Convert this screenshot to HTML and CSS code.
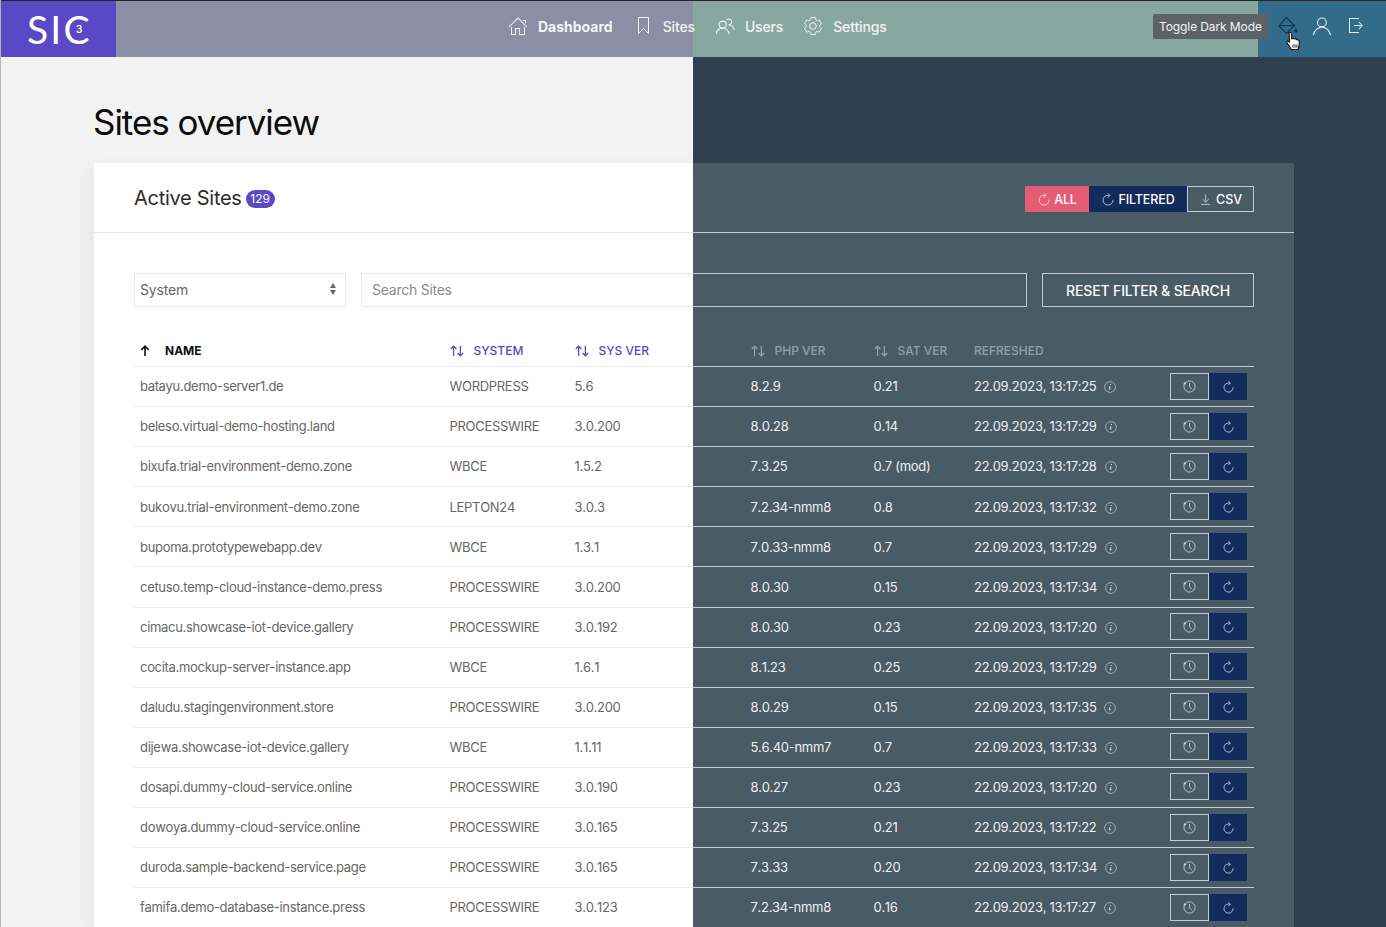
FILE: index.html
```html
<!DOCTYPE html>
<html lang="en">
<head>
<meta charset="utf-8">
<title>Sites overview</title>
<link rel="stylesheet" href="styles.css">
</head>
<body>
<svg class="defs" aria-hidden="true">
  <symbol id="i-home" viewBox="0 0 20 20"><polygon fill="currentColor" points="18.65 11.35 10 2.71 1.35 11.35 0.65 10.65 10 1.29 19.35 10.65"/><polygon fill="currentColor" points="15 4 18 4 18 7 17 7 17 5 15 5"/><polygon fill="currentColor" points="3 11 4 11 4 18 7 18 7 12 12 12 12 18 16 18 16 11 17 11 17 19 11 19 11 13 8 13 8 19 3 19"/></symbol>
  <symbol id="i-bookmark" viewBox="0 0 20 20"><polygon fill="none" stroke="currentColor" points="5.5 1.5 15.5 1.5 15.5 17.5 10.5 12.5 5.5 17.5"/></symbol>
  <symbol id="i-users" viewBox="0 0 20 20"><circle fill="none" stroke="currentColor" stroke-width="1.1" cx="7.7" cy="8.6" r="3.5"/><path fill="none" stroke="currentColor" stroke-width="1.1" d="M1,18.1 C1.7,14.6 4.4,12.1 7.6,12.1 C10.9,12.1 13.7,14.8 14.3,18.3"/><path fill="none" stroke="currentColor" stroke-width="1.1" d="M11.4,4 C12.8,2.4 15.4,2.8 16.3,4.7 C17.2,6.6 15.7,8.9 13.6,8.9 C16.5,8.9 18.8,11.3 19.2,14.1"/></symbol>
  <symbol id="i-cog" viewBox="0 0 20 20"><circle fill="none" stroke="currentColor" cx="9.997" cy="10" r="3.31"/><path fill="none" stroke="currentColor" d="M18.488,12.285 L16.205,16.237 C15.322,15.496 14.185,15.281 13.303,15.791 C12.428,16.289 12.047,17.373 12.246,18.5 L7.735,18.5 C7.938,17.374 7.553,16.299 6.684,15.791 C5.801,15.27 4.655,15.492 3.773,16.237 L1.5,12.285 C2.573,11.871 3.317,10.999 3.317,9.991 C3.305,8.98 2.573,8.121 1.5,7.716 L3.765,3.784 C4.645,4.516 5.794,4.738 6.687,4.232 C7.555,3.722 7.939,2.637 7.735,1.5 L12.263,1.5 C12.072,2.637 12.441,3.71 13.314,4.22 C14.206,4.73 15.343,4.516 16.225,3.794 L18.487,7.714 C17.404,8.117 16.661,8.988 16.67,10.009 C16.672,11.018 17.415,11.88 18.488,12.285 Z"/></symbol>
  <symbol id="i-bucket" viewBox="0 0 20 20"><path fill="none" stroke="currentColor" stroke-width="1.1" d="M8.5 1.5 L16.5 9.5 L8.5 17.5 L0.9 9.9 Z M1.2 9.5 H16.3 M5 4.8 L8.5 1.5"/><path fill="currentColor" d="M18 12 C18.9 13.4 19.6 14.3 19.6 15.2 A1.6 1.6 0 0 1 16.4 15.2 C16.4 14.3 17.1 13.4 18 12 Z"/></symbol>
  <symbol id="i-user" viewBox="0 0 20 20"><circle fill="none" stroke="currentColor" stroke-width="1.1" cx="9.9" cy="6.4" r="4.4"/><path fill="none" stroke="currentColor" stroke-width="1.1" d="M1.5,19 C2.3,14.5 5.8,11.2 10,11.2 C14.2,11.2 17.7,14.6 18.5,19.2"/></symbol>
  <symbol id="i-out" viewBox="0 0 20 20"><polygon fill="currentColor" points="13.1 13.4 12.5 12.8 15.28 10 8 10 8 9 15.28 9 12.5 6.2 13.1 5.62 17 9.5"/><polygon fill="currentColor" points="13 2 3 2 3 17 13 17 13 16 4 16 4 3 13 3"/></symbol>
  <symbol id="i-refresh" viewBox="0 0 20 20"><path fill="none" stroke="currentColor" stroke-width="1.1" d="M17.08,11.15 C17.09,11.31 17.1,11.47 17.1,11.64 C17.1,15.53 13.94,18.69 10.05,18.69 C6.16,18.68 3,15.53 3,11.63 C3,7.74 6.16,4.58 10.05,4.58 C10.9,4.58 11.71,4.73 12.46,5"/><polyline fill="none" stroke="currentColor" stroke-width="1.1" points="9.9 2 12.79 4.89 9.79 7.9"/></symbol>
  <symbol id="i-history" viewBox="0 0 20 20"><circle fill="none" stroke="currentColor" stroke-width="1.2" cx="10" cy="10" r="8.6"/><path fill="none" stroke="currentColor" stroke-width="1.2" d="M10 4.5 V10.4 L13.6 13.6"/><path fill="currentColor" d="M0.6 7 L5 6.4 L2 3 Z"/></symbol>
  <symbol id="i-download" viewBox="0 0 20 20"><polyline fill="none" stroke="currentColor" points="14,10 9.5,14.5 5,10"/><rect fill="currentColor" x="3" y="17" width="13" height="1"/><line fill="none" stroke="currentColor" x1="9.5" y1="13.91" x2="9.5" y2="3"/></symbol>
  <symbol id="i-info" viewBox="0 0 20 20"><path fill="currentColor" d="M12.13,11.59 C11.97,12.84 10.35,14.12 9.1,14.16 C6.17,14.2 9.89,9.46 8.74,8.37 C9.3,8.16 10.62,7.83 10.62,8.81 C10.62,9.63 10.12,10.55 9.88,11.32 C8.66,15.16 12.13,11.15 12.14,11.18 C12.16,11.21 12.16,11.35 12.13,11.59 Z M11.56,5.67 C11.56,6.67 9.36,7.15 9.36,6.03 C9.36,5 11.56,4.54 11.56,5.67 Z"/><circle fill="none" stroke="currentColor" stroke-width="1.1" cx="10" cy="10" r="9"/></symbol>
  <symbol id="i-sort" viewBox="0 0 14 12"><path fill="none" stroke="currentColor" stroke-width="1.3" d="M3.6 11 V1.4 M0.8 4 L3.6 1.2 L6.4 4 M10.4 1 V10.6 M7.6 8 L10.4 10.8 L13.2 8"/></symbol>
  <symbol id="i-up" viewBox="0 0 10 12"><path fill="none" stroke="currentColor" stroke-width="1.6" d="M5 11 V1.5 M1.2 5 L5 1.2 L8.8 5"/></symbol>
</svg>

<header class="topbar">
  <a class="logo"><span class="logo-word">SIC</span><span class="logo-sup">3</span></a>
  <nav class="nav">
    <a class="nav-link active"><svg class="ico"><use href="#i-home"/></svg>Dashboard</a>
    <a class="nav-link"><svg class="ico"><use href="#i-bookmark"/></svg>Sites</a>
    <a class="nav-link"><svg class="ico"><use href="#i-users"/></svg>Users</a>
    <a class="nav-link"><svg class="ico"><use href="#i-cog"/></svg>Settings</a>
  </nav>
  <div class="tools">
    <a class="tool tool-bucket"><svg class="ico"><use href="#i-bucket"/></svg></a>
    <a class="tool"><svg class="ico"><use href="#i-user"/></svg></a>
    <a class="tool"><svg class="ico"><use href="#i-out"/></svg></a>
  </div>
  <div class="tooltip">Toggle Dark Mode</div>
  <svg class="cursor" viewBox="0 0 14 18"><path fill="#fff" stroke="#111" stroke-width="1" d="M3.5 1.6 C4.4 .8 5.6 1.3 5.7 2.4 L5.9 7 C7 6.4 8 6.6 8.3 7.2 C9.2 6.8 10.2 7.1 10.4 7.9 C11.4 7.6 12.6 8.2 12.6 9.4 V12.6 L11.6 16.6 H5.6 L1.6 10.6 C1 9.4 2.2 8.6 3.4 9.6 L3.8 10 Z"/><path fill="none" stroke="#111" stroke-width=".8" d="M7 12 V15 M8.8 12 V15 M10.5 12 V15"/></svg>
</header>

<main class="page">
  <h1 class="title">Sites overview</h1>
  <section class="card">
    <div class="card-head">
      <h2 class="card-title">Active Sites <span class="badge">129</span></h2>
      <div class="head-actions">
        <button class="btn btn-pink"><svg class="ico-s"><use href="#i-refresh"/></svg>ALL</button>
        <button class="btn btn-navy"><svg class="ico-s"><use href="#i-refresh"/></svg>FILTERED</button>
        <button class="btn btn-line"><svg class="ico-s"><use href="#i-download"/></svg>CSV</button>
      </div>
    </div>
    <div class="card-body">
      <div class="filters">
        <div class="select-wrap">
          <select class="select"><option>System</option></select>
          <span class="select-arrows"></span>
        </div>
        <input class="search" type="text" placeholder="Search Sites">
        <button class="reset">RESET FILTER &amp; SEARCH</button>
      </div>
      <div class="table">
        <div class="row row-head">
          <span class="th th-active"><svg class="sort-up"><use href="#i-up"/></svg>NAME</span>
          <span class="th"><svg class="sort"><use href="#i-sort"/></svg>SYSTEM</span>
          <span class="th"><svg class="sort"><use href="#i-sort"/></svg>SYS VER</span>
          <span class="th"><svg class="sort"><use href="#i-sort"/></svg>PHP VER</span>
          <span class="th"><svg class="sort"><use href="#i-sort"/></svg>SAT VER</span>
          <span class="th">REFRESHED</span>
          <span class="th"></span>
        </div>
        <div class="row"><span>batayu.demo-server1.de</span><span>WORDPRESS</span><span>5.6</span><span>8.2.9</span><span>0.21</span><span class="stamp">22.09.2023, 13:17:25<svg class="info"><use href="#i-info"/></svg></span><span class="acts"><a class="act act-line"><svg class="ico-a"><use href="#i-history"/></svg></a><a class="act act-navy"><svg class="ico-a"><use href="#i-refresh"/></svg></a></span></div>
        <div class="row"><span>beleso.virtual-demo-hosting.land</span><span>PROCESSWIRE</span><span>3.0.200</span><span>8.0.28</span><span>0.14</span><span class="stamp">22.09.2023, 13:17:29<svg class="info"><use href="#i-info"/></svg></span><span class="acts"><a class="act act-line"><svg class="ico-a"><use href="#i-history"/></svg></a><a class="act act-navy"><svg class="ico-a"><use href="#i-refresh"/></svg></a></span></div>
        <div class="row"><span>bixufa.trial-environment-demo.zone</span><span>WBCE</span><span>1.5.2</span><span>7.3.25</span><span>0.7 (mod)</span><span class="stamp">22.09.2023, 13:17:28<svg class="info"><use href="#i-info"/></svg></span><span class="acts"><a class="act act-line"><svg class="ico-a"><use href="#i-history"/></svg></a><a class="act act-navy"><svg class="ico-a"><use href="#i-refresh"/></svg></a></span></div>
        <div class="row"><span>bukovu.trial-environment-demo.zone</span><span>LEPTON24</span><span>3.0.3</span><span>7.2.34-nmm8</span><span>0.8</span><span class="stamp">22.09.2023, 13:17:32<svg class="info"><use href="#i-info"/></svg></span><span class="acts"><a class="act act-line"><svg class="ico-a"><use href="#i-history"/></svg></a><a class="act act-navy"><svg class="ico-a"><use href="#i-refresh"/></svg></a></span></div>
        <div class="row"><span>bupoma.prototypewebapp.dev</span><span>WBCE</span><span>1.3.1</span><span>7.0.33-nmm8</span><span>0.7</span><span class="stamp">22.09.2023, 13:17:29<svg class="info"><use href="#i-info"/></svg></span><span class="acts"><a class="act act-line"><svg class="ico-a"><use href="#i-history"/></svg></a><a class="act act-navy"><svg class="ico-a"><use href="#i-refresh"/></svg></a></span></div>
        <div class="row"><span>cetuso.temp-cloud-instance-demo.press</span><span>PROCESSWIRE</span><span>3.0.200</span><span>8.0.30</span><span>0.15</span><span class="stamp">22.09.2023, 13:17:34<svg class="info"><use href="#i-info"/></svg></span><span class="acts"><a class="act act-line"><svg class="ico-a"><use href="#i-history"/></svg></a><a class="act act-navy"><svg class="ico-a"><use href="#i-refresh"/></svg></a></span></div>
        <div class="row"><span>cimacu.showcase-iot-device.gallery</span><span>PROCESSWIRE</span><span>3.0.192</span><span>8.0.30</span><span>0.23</span><span class="stamp">22.09.2023, 13:17:20<svg class="info"><use href="#i-info"/></svg></span><span class="acts"><a class="act act-line"><svg class="ico-a"><use href="#i-history"/></svg></a><a class="act act-navy"><svg class="ico-a"><use href="#i-refresh"/></svg></a></span></div>
        <div class="row"><span>cocita.mockup-server-instance.app</span><span>WBCE</span><span>1.6.1</span><span>8.1.23</span><span>0.25</span><span class="stamp">22.09.2023, 13:17:29<svg class="info"><use href="#i-info"/></svg></span><span class="acts"><a class="act act-line"><svg class="ico-a"><use href="#i-history"/></svg></a><a class="act act-navy"><svg class="ico-a"><use href="#i-refresh"/></svg></a></span></div>
        <div class="row"><span>daludu.stagingenvironment.store</span><span>PROCESSWIRE</span><span>3.0.200</span><span>8.0.29</span><span>0.15</span><span class="stamp">22.09.2023, 13:17:35<svg class="info"><use href="#i-info"/></svg></span><span class="acts"><a class="act act-line"><svg class="ico-a"><use href="#i-history"/></svg></a><a class="act act-navy"><svg class="ico-a"><use href="#i-refresh"/></svg></a></span></div>
        <div class="row"><span>dijewa.showcase-iot-device.gallery</span><span>WBCE</span><span>1.1.11</span><span>5.6.40-nmm7</span><span>0.7</span><span class="stamp">22.09.2023, 13:17:33<svg class="info"><use href="#i-info"/></svg></span><span class="acts"><a class="act act-line"><svg class="ico-a"><use href="#i-history"/></svg></a><a class="act act-navy"><svg class="ico-a"><use href="#i-refresh"/></svg></a></span></div>
        <div class="row"><span>dosapi.dummy-cloud-service.online</span><span>PROCESSWIRE</span><span>3.0.190</span><span>8.0.27</span><span>0.23</span><span class="stamp">22.09.2023, 13:17:20<svg class="info"><use href="#i-info"/></svg></span><span class="acts"><a class="act act-line"><svg class="ico-a"><use href="#i-history"/></svg></a><a class="act act-navy"><svg class="ico-a"><use href="#i-refresh"/></svg></a></span></div>
        <div class="row"><span>dowoya.dummy-cloud-service.online</span><span>PROCESSWIRE</span><span>3.0.165</span><span>7.3.25</span><span>0.21</span><span class="stamp">22.09.2023, 13:17:22<svg class="info"><use href="#i-info"/></svg></span><span class="acts"><a class="act act-line"><svg class="ico-a"><use href="#i-history"/></svg></a><a class="act act-navy"><svg class="ico-a"><use href="#i-refresh"/></svg></a></span></div>
        <div class="row"><span>duroda.sample-backend-service.page</span><span>PROCESSWIRE</span><span>3.0.165</span><span>7.3.33</span><span>0.20</span><span class="stamp">22.09.2023, 13:17:34<svg class="info"><use href="#i-info"/></svg></span><span class="acts"><a class="act act-line"><svg class="ico-a"><use href="#i-history"/></svg></a><a class="act act-navy"><svg class="ico-a"><use href="#i-refresh"/></svg></a></span></div>
        <div class="row"><span>famifa.demo-database-instance.press</span><span>PROCESSWIRE</span><span>3.0.123</span><span>7.2.34-nmm8</span><span>0.16</span><span class="stamp">22.09.2023, 13:17:27<svg class="info"><use href="#i-info"/></svg></span><span class="acts"><a class="act act-line"><svg class="ico-a"><use href="#i-history"/></svg></a><a class="act act-navy"><svg class="ico-a"><use href="#i-refresh"/></svg></a></span></div>
      </div>
    </div>
  </section>
</main>
</body>
</html>
```
FILE: styles.css
```css
:root {
  --split: 693px;
  --page-l: #f2f2f2;
  --page-d: #2f4050;
  --card-l: #ffffff;
  --card-d: #495b65;
  --line-l: #ececec;
  --line-d: #c4ced2;
  --text-d: #eef1f2;
  --purple: #5a48c5;
  --navy: #122b5c;
}
* { box-sizing: border-box; }
html, body { margin: 0; height: 100%; overflow: hidden; }
body {
  font-family: Inter, "Liberation Sans", sans-serif;
  font-size: 13px;
  color: #666;
  border-left: 1px solid #b4b4b8;
  background: linear-gradient(to right, var(--page-l) var(--split), var(--page-d) var(--split)) fixed;
}
.defs { position: absolute; width: 0; height: 0; }

/* top bar */
.topbar {
  position: relative;
  height: 57px;
  margin-left: -1px;
  display: flex;
  align-items: center;
  border-top: 1px solid #26262a;
  background: linear-gradient(to right, #8c8ea6 var(--split), #88a89f var(--split), #88a89f 1258px, #336b8b 1258px);
}
.logo {
  position: relative;
  width: 116px;
  height: 56px;
  flex: none;
  background: var(--purple);
  color: #fff;
  padding-left: 27px;
  display: flex;
  align-items: center;
}
.logo-word { font-family: Lato, sans-serif; font-weight: 400; font-size: 39px; letter-spacing: 2.2px; line-height: 1; }
.logo-sup { position: absolute; left: 76px; top: 23px; font-size: 10px; font-weight: 600; line-height: 1; }
.nav {
  position: absolute;
  left: 508px;
  top: 0;
  height: 50px;
  display: flex;
  align-items: center;
  gap: 20px;
}
.nav-link {
  display: flex;
  align-items: center;
  gap: 10px;
  color: #f2f4f4;
  font-size: 14px;
  font-weight: 500;
  letter-spacing: -0.15px;
}
.nav-link.active { font-weight: 700; letter-spacing: 0; }
.ico { width: 20px; height: 20px; flex: none; }
.tools {
  margin-left: auto;
  padding: 0 20px 6px 0;
  display: flex;
  gap: 14px;
  color: #e9eef1;
}
.tool { display: block; height: 20px; }
.tool-bucket { color: #14314f; }
.tooltip {
  position: absolute;
  left: 1153px;
  top: 13px;
  width: 115px;
  height: 25px;
  padding: 0 6px;
  display: flex;
  align-items: center;
  background: #5c6266;
  color: #f4f4f4;
  font-size: 12px;
  letter-spacing: -0.1px;
  border-radius: 2px;
  white-space: nowrap;
}
.cursor { position: absolute; left: 1285px; top: 30px; width: 16px; height: 20px; }

/* page */
.page { margin-left: 93px; width: 1200px; }
.title {
  margin: 0 0 0 -1px;
  padding-top: 41px;
  height: 106px;
  font-size: 35px;
  font-weight: 400;
  line-height: 48px;
  color: #0b0b0b;
  letter-spacing: -1.05px;
}
.card {
  background: linear-gradient(to right, var(--card-l) var(--split), var(--card-d) var(--split)) fixed;
  box-shadow: -4px 4px 14px rgba(0, 0, 0, 0.05);
}
.card-head {
  height: 70px;
  padding: 0 40px;
  display: flex;
  align-items: center;
  justify-content: space-between;
  background: linear-gradient(to right, #e7e7e7 599px, var(--line-d) 599px) bottom / 100% 1px no-repeat;
}
.card-title { margin: 0; font-size: 20px; font-weight: 400; color: #2c2c2c; display: flex; align-items: center; gap: 4px; letter-spacing: -0.28px; }
.badge {
  display: inline-block;
  width: 29px;
  height: 18px;
  margin-top: 2px;
  border-radius: 9px;
  background: var(--purple);
  color: #fff;
  font-size: 12px;
  line-height: 18px;
  text-align: center;
  letter-spacing: 0;
}
.head-actions { display: flex; padding-top: 2px; }
.btn {
  height: 26px;
  border: 0;
  padding: 0;
  display: flex;
  align-items: center;
  justify-content: center;
  gap: 3px;
  font: 500 12.5px Inter, sans-serif;
  letter-spacing: -0.1px;
  color: #fff;
}
.ico-s { width: 14px; height: 14px; opacity: .85; }
.btn-pink { width: 64px; background: #e35d75; }
.btn-navy { width: 98px; background: var(--navy); }
.btn-line { width: 67px; background: transparent; border: 1px solid var(--line-d); }
.card-body { padding: 40px 40px 0; }
.filters { display: flex; gap: 15px; height: 34px; }
.select-wrap { position: relative; width: 212px; flex: none; }
.select {
  width: 100%;
  height: 100%;
  appearance: none;
  background: #fff;
  border: 1px solid #e8e8e8;
  border-radius: 0;
  padding: 0 5px 1px;
  font: 14px Inter, sans-serif;
  letter-spacing: -0.15px;
  color: #666;
}
.select-arrows { position: absolute; right: 10px; top: 10px; width: 6px; height: 12px; }
.select-arrows::before, .select-arrows::after {
  content: "";
  position: absolute;
  left: 0;
  border-left: 3px solid transparent;
  border-right: 3px solid transparent;
}
.select-arrows::before { top: 0; border-bottom: 5px solid #666; }
.select-arrows::after { bottom: 0; border-top: 5px solid #666; }
.search {
  width: 666px;
  flex: none;
  padding: 0 10px 1px;
  font: 14px Inter, sans-serif;
  letter-spacing: -0.25px;
  border: 1px solid;
  border-image: linear-gradient(to right, #e8e8e8 332px, var(--line-d) 332px) 1;
  background: transparent;
  outline: 0;
}
.search::placeholder { color: #8c8c8c; opacity: 1; }
.reset {
  flex: 1;
  background: transparent;
  border: 1px solid var(--line-d);
  color: #fff;
  font: 500 14px Inter, sans-serif;
  letter-spacing: -0.15px;
  padding: 0;
}

/* table */
.table { margin-top: 27px; }
.row {
  display: grid;
  grid-template-columns: 309.5px 125px 176px 123px 100.5px 196px 90px;
  align-items: center;
  height: 40.1px;
  padding-bottom: 1.6px;
  background: linear-gradient(to right, var(--line-l) 559px, var(--line-d) 559px) bottom / 100% 1px no-repeat;
}
.row > span { padding-left: 6px; white-space: nowrap; letter-spacing: -0.3px; font-kerning: none; }
.row > .stamp { letter-spacing: -0.3px; }
.row > :nth-child(n+4) { color: var(--text-d); }
.row-head { height: 33px; padding-bottom: 0; }
.row > .th { font-size: 12px; font-weight: 500; color: var(--purple); display: flex; align-items: center; gap: 10px; letter-spacing: 0; font-kerning: auto; }
.row > .th:nth-child(n+4) { color: #8fa2a7; }
.row > .th-active { color: #111; font-weight: 700; }
.sort { width: 14px; height: 12px; }
.sort-up { width: 10px; height: 12px; margin-right: 5px; }
.stamp { display: flex; align-items: center; gap: 8px; }
.info { width: 12px; height: 12px; margin-top: 2px; opacity: .85; }
.row > .acts { display: flex; padding-left: 6px; margin-top: -0.4px; }
.act { width: 39px; height: 27px; display: flex; align-items: center; justify-content: center; color: #d8dfe2; }
.act-line { border: 1px solid var(--line-d); }
.act-navy { width: 38px; background: var(--navy); color: #e8edf3; }
.ico-a { width: 13px; height: 13px; }
```
